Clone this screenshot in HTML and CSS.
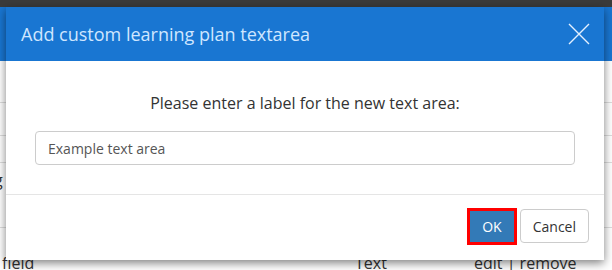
FILE: index.html
```
<html>
    <head>
        <link rel="stylesheet" href="styles.css">
    </head>
    <body>
        <div class="topbar"></div>
        <div class="page">
            <div class="page-head"></div>
            <div class="rows">
                <div class="row r1"></div>
                <div class="row r2"></div>
                <div class="row r3"></div>
                <div class="row r4"><span class="cut">g</span></div>
                <div class="row last">
                    <span class="c-name">field</span>
                    <span class="c-type">Text</span>
                    <span class="c-act">edit | remove</span>
                </div>
            </div>
        </div>

        <div class="modal">
            <div class="modal-header">
                <h4>Add custom learning plan textarea</h4>
                <button class="close" aria-label="close">
                    <svg width="22" height="22" viewBox="0 0 22 22">
                        <path d="M1 1 L21 21 M21 1 L1 21" stroke="#e3f0ff" stroke-width="1.4" fill="none"/>
                    </svg>
                </button>
            </div>
            <div class="modal-body">
                <p>Please enter a label for the new text area:</p>
                <input type="text" value="Example text area">
            </div>
            <div class="modal-footer">
                <button class="btn btn-ok">OK</button>
                <button class="btn btn-cancel">Cancel</button>
            </div>
        </div>
    </body>
</html>
```

FILE: styles.css
```
body {
    margin: 0;
    font-family: "Open Sans", Arial, sans-serif;
    background-color: #fff;
    width: 612px;
    height: 270px;
    overflow: hidden;
    position: relative;
}

.topbar {
    height: 7px;
    background-color: #3b3b3b;
}

.page-head {
    height: 54px;
    background-color: #1976d2;
}

.rows {
    color: #333;
    font-size: 16px;
}

.row {
    border-bottom: 1px solid #ddd;
    position: relative;
}

.r1 { height: 41px; }
.r2 { height: 32px; }
.r3 { height: 26px; }
.r4 { height: 64px; }

.cut {
    position: absolute;
    left: -6px;
    top: 6px;
}

.row.last {
    border-bottom: none;
    height: 44px;
}

.c-name { position: absolute; left: 2px; top: 24px; }
.c-type { position: absolute; left: 355px; top: 24px; }
.c-act { position: absolute; left: 474px; top: 24px; }

.modal {
    position: absolute;
    left: 6px;
    top: 7px;
    width: 598px;
    height: 253px;
    background-color: #fff;
    box-shadow: 0 3px 9px rgba(0, 0, 0, 0.5);
    display: flex;
    flex-direction: column;
}

.modal-header {
    background-color: #1976d2;
    height: 54px;
    display: flex;
    align-items: center;
    justify-content: space-between;
    padding: 0 14px 0 15px;
}

.modal-header h4 {
    margin: 0;
    font-size: 18px;
    font-weight: normal;
    color: #cfe6ff;
}

.close {
    background: none;
    border: none;
    padding: 0;
    width: 22px;
    height: 22px;
    cursor: pointer;
}

.modal-body {
    padding: 0 29px;
    border-bottom: 1px solid #e5e5e5;
    height: 133px;
}

.modal-body p {
    text-align: center;
    font-size: 16px;
    color: #333;
    margin: 31px 0 17px;
}

.modal-body input {
    width: 100%;
    height: 34px;
    border: 1px solid #ccc;
    border-radius: 4px;
    padding: 0 12px;
    font-family: "Open Sans", Arial, sans-serif;
    font-size: 14px;
    color: #555;
    box-sizing: border-box;
}

.modal-footer {
    display: flex;
    justify-content: flex-end;
    gap: 3px;
    padding: 14px 15px 0;
}

.btn {
    font-family: "Open Sans", Arial, sans-serif;
    font-size: 14px;
    height: 34px;
    padding: 0 12px;
    border-radius: 4px;
    cursor: pointer;
}

.btn-ok {
    background-color: #337ab7;
    color: #fff;
    border: 3px solid #f00;
    border-radius: 0;
    height: 37px;
    margin-top: -1px;
    padding: 0 12px;
}

.btn-cancel {
    background-color: #fff;
    color: #333;
    border: 1px solid #ccc;
}
```
